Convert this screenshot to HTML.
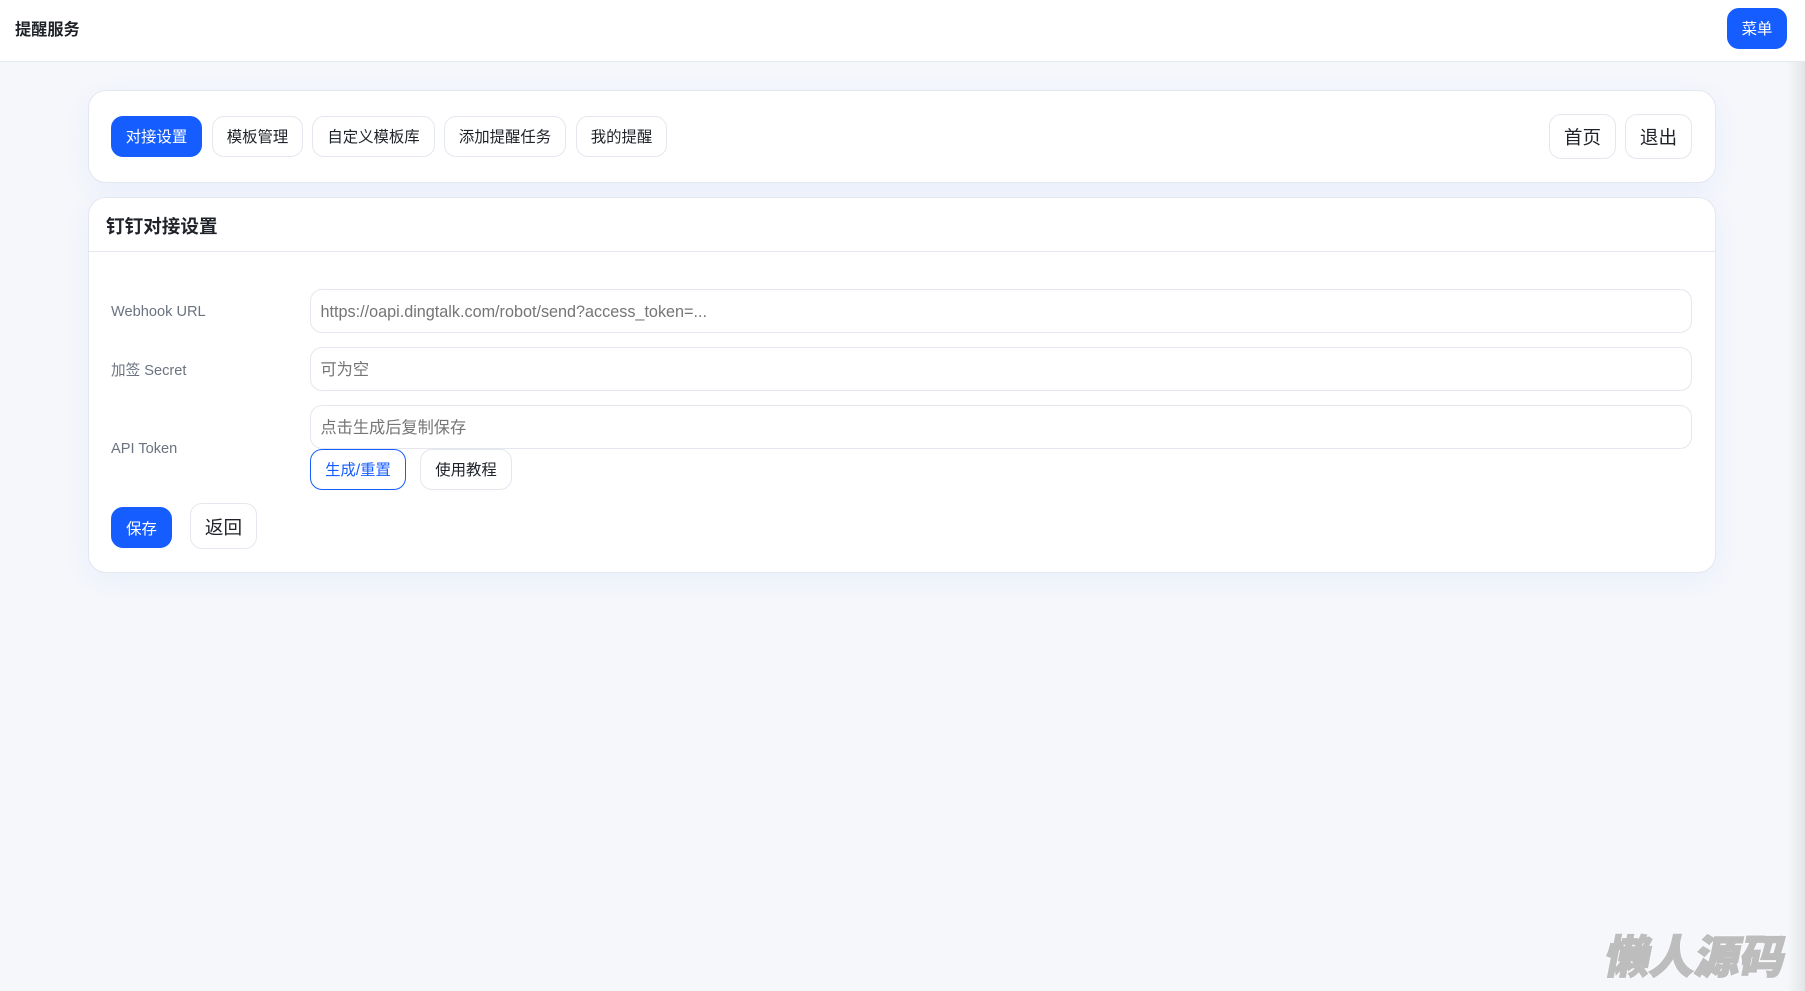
<!DOCTYPE html>
<html lang="zh-CN">
<head>
<meta charset="utf-8">
<title>提醒服务</title>
<style>
*{box-sizing:border-box;margin:0;padding:0}
html,body{width:1805px;height:991px;overflow:hidden}
body{position:relative;background:#f5f7fb;font-family:"Liberation Sans","Noto Sans CJK SC",sans-serif;color:#1f2329}
.a{position:absolute}
.header{left:0;top:0;width:1805px;height:62px;background:#fff;border-bottom:1px solid #e5e7ef;z-index:3}
.card{background:#fff;border:1px solid #e5e7ef;border-radius:18px;box-shadow:0 7px 28px rgba(22,93,255,.055)}
.btn{display:flex;align-items:center;justify-content:center;border:1px solid #e5e7ef;border-radius:12px;background:#fff;font-size:15.4px;color:#1f2329;white-space:nowrap}
.btn span{position:relative;top:-1px}
.pri{background:#165dff;border-color:#165dff;color:#fff}
.big{font-size:18.6px}
.input{left:310px;width:1382px;height:44px;border:1px solid #e5e7ef;border-radius:12px;background:#fff;color:#757575;font-size:16.2px;line-height:45px;padding-left:9.5px;white-space:nowrap}
.label{left:111px;font-size:14.6px;color:#6b7280;line-height:20px;white-space:nowrap}
.edge{right:0;top:62px;width:18px;height:929px;background:linear-gradient(to right,rgba(0,0,0,0),rgba(0,0,0,.075));z-index:2}
.wm{left:1606px;top:928px;width:190px;font-size:45px;line-height:60px;font-weight:900;color:#bdbdbd;white-space:nowrap;transform:skewX(-11deg);-webkit-text-stroke:1.5px #bdbdbd;text-shadow:0 0 3px #fff,0 0 3px #fff;z-index:4}
</style>
</head>
<body>
<div class="a header"></div>
<div class="a" style="left:15px;top:19px;font-size:16.2px;line-height:22px;font-weight:700;z-index:4">提醒服务</div>
<div class="a btn pri" style="left:1727px;top:8px;width:60px;height:41px;z-index:4"><span>菜单</span></div>

<div class="a card" style="left:88px;top:90px;width:1628px;height:93px"></div>
<div class="a btn pri" style="left:111px;top:116px;width:91px;height:41px"><span>对接设置</span></div>
<div class="a btn" style="left:212px;top:116px;width:91px;height:41px"><span>模板管理</span></div>
<div class="a btn" style="left:312px;top:116px;width:123px;height:41px"><span>自定义模板库</span></div>
<div class="a btn" style="left:444px;top:116px;width:122px;height:41px"><span>添加提醒任务</span></div>
<div class="a btn" style="left:576px;top:116px;width:91px;height:41px"><span>我的提醒</span></div>
<div class="a btn big" style="left:1549px;top:114px;width:67px;height:45px">首页</div>
<div class="a btn big" style="left:1625px;top:114px;width:67px;height:45px">退出</div>

<div class="a card" style="left:88px;top:197px;width:1628px;height:376px"></div>
<div class="a" style="left:88px;top:251px;width:1628px;height:1px;background:#e5e7ef"></div>
<div class="a" style="left:106px;top:214px;font-size:18.6px;line-height:26px;font-weight:700">钉钉对接设置</div>

<div class="a label" style="top:302px">Webhook URL</div>
<div class="a input" style="top:289px">https://oapi.dingtalk.com/robot/send?access_token=...</div>
<div class="a label" style="top:361px">加签 Secret</div>
<div class="a input" style="top:347px">可为空</div>
<div class="a label" style="top:439px">API Token</div>
<div class="a input" style="top:405px">点击生成后复制保存</div>
<div class="a btn" style="left:310px;top:449px;width:96px;height:41px;border-color:#165dff;color:#165dff"><span>生成/重置</span></div>
<div class="a btn" style="left:420px;top:449px;width:92px;height:41px"><span>使用教程</span></div>
<div class="a btn pri" style="left:111px;top:507px;width:61px;height:41px">保存</div>
<div class="a btn big" style="left:190px;top:503px;width:67px;height:46px;padding-top:1px">返回</div>

<div class="a edge"></div>
<div class="a wm">懒人源码</div>
</body>
</html>
